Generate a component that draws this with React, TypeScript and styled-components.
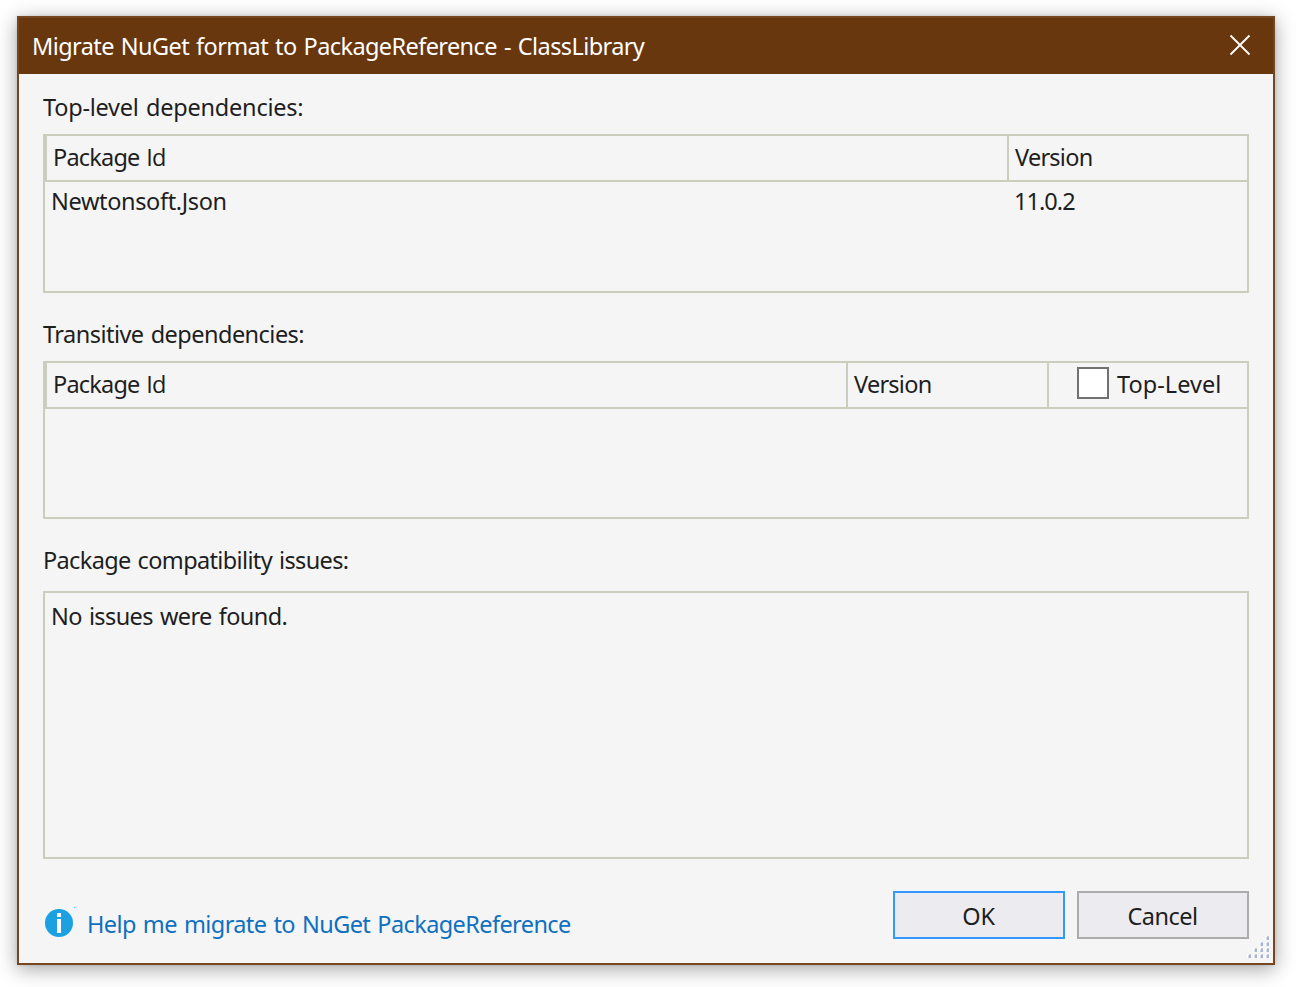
import React from 'react';
import styled, { createGlobalStyle } from 'styled-components';

const GlobalStyle = createGlobalStyle`
  * { box-sizing: border-box; }
  html, body { margin: 0; background: #fff; }
  body {
    font-family: "Noto Sans", "Open Sans", sans-serif;
    font-size: 23.5px;
    line-height: 32px;
    color: #1e1e1e;
    overflow: hidden;
  }
`;

const line = '#cccebd';

const Desktop = styled.div`
  width: 1296px;
  height: 987px;
  padding: 16px 21px 22px 17px;
`;

const Dialog = styled.div`
  display: flex;
  flex-direction: column;
  width: 1258px;
  height: 949px;
  border: 2px solid #744720;
  background: #f5f5f5;
  box-shadow: 0 4px 19px rgba(0, 0, 0, 0.36), 0 0 3px rgba(0, 0, 0, 0.12);
`;

const TitleBar = styled.header`
  display: flex;
  align-items: flex-start;
  justify-content: space-between;
  height: 56px;
  padding: 12px 22px 0 13px;
  background: #68370e;
  color: #fff;
`;

const CloseButton = styled.button`
  display: flex;
  margin-top: 4px;
  padding: 0;
  border: 0;
  background: none;
`;

const Text = styled.span<{ $track?: number }>`
  white-space: pre;
  letter-spacing: ${({ $track = 0 }) => $track}px;
  word-spacing: 1.5px;
`;

const PlainCapital = styled.span`
  font-family: "Open Sans", sans-serif;
  line-height: 0;
`;

const Content = styled.main`
  display: flex;
  flex-direction: column;
  padding: 17px 24px 0;
`;

const Label = styled.div<{ $gap: number }>`
  height: ${({ $gap }) => 32 + $gap}px;
`;

const Panel = styled.section<{ $height: number; $after: number }>`
  height: ${({ $height }) => $height}px;
  margin-bottom: ${({ $after }) => $after}px;
  border: 2px solid ${line};
`;

const HeaderRow = styled.div<{ $columns: string }>`
  display: grid;
  grid-template-columns: ${({ $columns }) => $columns};
  height: 46px;
  border-bottom: 2px solid ${line};
`;

const HeaderCell = styled.div`
  display: flex;
  padding: 5px 0 0 6px;
  border-left: 2px solid ${line};
`;

const CheckCell = styled(HeaderCell)`
  padding: 4px 0 0 28px;
  gap: 8px;

  & > span { margin-top: 1px; }
`;

const CheckBox = styled.span.attrs({ role: 'checkbox', 'aria-checked': false })`
  && { margin-top: 0; }
  width: 32px;
  height: 32px;
  border: 2px solid #717171;
  background: #fff;
`;

const Row = styled.div`
  display: grid;
  grid-template-columns: 963px 1fr;
  padding: 3px 0 0 6px;
`;

const Message = styled.div`
  padding: 7px 6px;
`;

const Footer = styled.footer`
  display: flex;
  align-items: flex-start;
  height: 48px;
`;

const HelpLink = styled.a`
  display: flex;
  flex: 1;
  padding: 17px 0 0 2px;
  gap: 12px;
  color: #0e70c0;
`;

const InfoIcon = styled.svg`
  overflow: visible;
`;

const Buttons = styled.div`
  display: flex;
  gap: 12px;
`;

const Button = styled.button<{ $primary?: boolean }>`
  width: 172px;
  height: 48px;
  padding: 2px 1px 0 0;
  border: 2px solid ${({ $primary }) => ($primary ? '#3399ff' : '#acacac')};
  background: #ececf0;
  color: #1e1e1e;
  font: inherit;
  line-height: 42px;
`;

const Grip = styled.svg`
  align-self: flex-end;
  margin: -3px 3px 0 0;
  flex: none;
`;

const dots = [[18, 0], [12, 6], [18, 6], [6, 12], [12, 12], [18, 12], [0, 18], [6, 18], [12, 18], [18, 18]];

const PackageId = () => (
  <Text $track={-0.8}>
    Package <PlainCapital>Id</PlainCapital>
  </Text>
);

export default function App() {
  return (
    <>
      <GlobalStyle />
      <Desktop>
        <Dialog role="dialog">
          <TitleBar>
            <Text $track={-0.6}>Migrate NuGet format to PackageReference - ClassLibrary</Text>
            <CloseButton aria-label="Close">
              <svg width="22" height="22" viewBox="0 0 22 22" fill="none" stroke="#fff" strokeWidth="1.8">
                <path d="M1.5 1.5 20.5 20.5M20.5 1.5 1.5 20.5" />
              </svg>
            </CloseButton>
          </TitleBar>
          <Content>
            <Label $gap={11}><Text $track={-0.23}>Top-level dependencies:</Text></Label>
            <Panel $height={159} $after={25}>
              <HeaderRow $columns="962px 1fr">
                <HeaderCell><PackageId /></HeaderCell>
                <HeaderCell><Text $track={-0.75}>Version</Text></HeaderCell>
              </HeaderRow>
              <Row>
                <Text $track={-0.36}>Newtonsoft.Json</Text>
                <Text $track={-0.95}>11.0.2</Text>
              </Row>
            </Panel>
            <Label $gap={11}><Text $track={-0.53}>Transitive dependencies:</Text></Label>
            <Panel $height={158} $after={25}>
              <HeaderRow $columns="801px 201px 1fr">
                <HeaderCell><PackageId /></HeaderCell>
                <HeaderCell><Text $track={-0.75}>Version</Text></HeaderCell>
                <CheckCell>
                  <CheckBox />
                  <Text $track={0.05}>Top-Level</Text>
                </CheckCell>
              </HeaderRow>
            </Panel>
            <Label $gap={15}><Text $track={-0.64}>Package compatibility issues:</Text></Label>
            <Panel $height={268} $after={32}>
              <Message><Text $track={-0.6}>No issues were found.</Text></Message>
            </Panel>
            <Footer>
              <HelpLink>
                <InfoIcon width="30" height="30" viewBox="0 0 30 30">
                  <circle cx="14" cy="15" r="14" fill="#1ba1e2" />
                  <path d="M12 5h4v4h-4zM12 11h4v14h-4z" fill="#fff" />
                  <path d="M29-1h1v1h-1z" fill="#00ffff" />
                </InfoIcon>
                <Text $track={-0.59}>Help me migrate to NuGet PackageReference</Text>
              </HelpLink>
              <Buttons>
                <Button $primary><Text $track={-0.3}>OK</Text></Button>
                <Button><Text $track={-0.55}>Cancel</Text></Button>
              </Buttons>
            </Footer>
          </Content>
          <Grip width="23" height="23" viewBox="0 0 23 23" shapeRendering="crispEdges">
            {dots.map(([x, y]) => (
              <g key={`${x}-${y}`}>
                <path d={`M${x} ${y}h4v4h-4z`} fill="#fff" />
                <path d={`M${x + 1} ${y + 1}h1v3h-1z`} fill="#d3dae7" />
                <path d={`M${x + 2} ${y}h2v4h-2z`} fill="#c3cde0" />
                <path d={`M${x + 2} ${y + 1}h2v3h-2z`} fill="#a9b7d2" />
              </g>
            ))}
          </Grip>
        </Dialog>
      </Desktop>
    </>
  );
}
